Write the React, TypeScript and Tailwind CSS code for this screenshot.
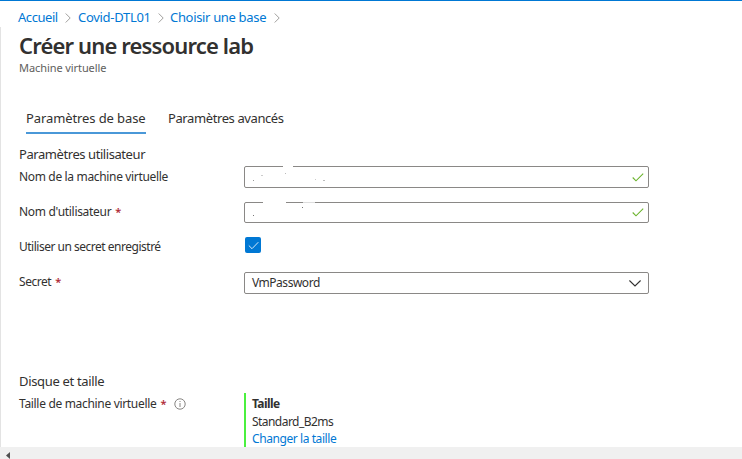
import type { ReactNode } from "react";

function Chevron() {
  return (
    <svg width="6" height="10" viewBox="0 0 6 10" className="shrink-0" fill="none" stroke="#a19f9d" strokeWidth="1">
      <path d="M.7.5 5.2 5 .7 9.5" />
    </svg>
  );
}

function Valid() {
  return (
    <svg width="12" height="9" viewBox="0 0 12 9" className="mr-[4px]" fill="none" stroke="#6bb32c" strokeWidth="1.1">
      <path d="M.7 4.5 4 7.8 11.2.6" />
    </svg>
  );
}

function Required() {
  return <span className="ml-[4px] w-[5px] pt-px text-[11px] font-semibold tracking-normal text-[#b02a36]">*</span>;
}

function Label({ children, className = "" }: { children: ReactNode; className?: string }) {
  return <div className={`flex w-[225px] shrink-0 items-center text-[12px] ${className}`}>{children}</div>;
}

export default function App() {
  return (
    <div className="flex h-[459px] w-[742px] flex-col overflow-hidden whitespace-nowrap border-t border-[#0078d4] bg-white font-['Noto_Sans',sans-serif] text-[#323130]">
      <nav className="flex h-[26px] shrink-0 items-center pl-[18px] pt-[8px] text-[13px] text-[#0078d4]">
        <a className="w-[47px] tracking-[-0.45px]">Accueil</a>
        <Chevron />
        <a className="ml-[7px] w-[80px] tracking-[-0.3px]">Covid-DTL01</a>
        <Chevron />
        <a className="ml-[6px] w-[104px] tracking-[-0.33px]">Choisir une base</a>
        <Chevron />
      </nav>

      <main className="flex h-[420px] shrink-0 flex-col border-l border-[#e3e3e3] pl-[18px]">
        <h1 className="h-[35px] shrink-0 text-[22px] font-semibold leading-[37px] tracking-[-0.85px]">Créer une ressource lab</h1>
        <div className="h-[12px] shrink-0 text-[11px] leading-[12px] tracking-[-0.08px] text-[#605e5c]">Machine virtuelle</div>

        <div className="mt-[31px] flex h-[29px] shrink-0 gap-[22px] pl-[7px] text-[13px] leading-[27px]">
          <div className="h-[29px] w-[120px] border-b-2 border-[#4a98d8] tracking-[-0.1px]">Paramètres de base</div>
          <div className="tracking-[-0.4px]">Paramètres avancés</div>
        </div>

        <h2 className="mt-[10px] h-[22px] shrink-0 text-[13px] leading-[20px] tracking-[-0.43px]">Paramètres utilisateur</h2>
        <div className="flex h-[22px] shrink-0">
          <Label className="tracking-[-0.34px]">Nom de la machine virtuelle</Label>
          <div className="relative flex h-[22px] w-[405px] items-center justify-end rounded-[2px] border border-[#8a8886]">
            <span className="absolute left-[38px] top-[-1px] h-px w-[10px] bg-white" />
            <span className="absolute left-[8px] top-[13px] size-px bg-[#999]" />
            <span className="absolute left-[16px] top-[8px] h-px w-[2px] bg-[#ccc]" />
            <span className="absolute left-[40px] top-[6px] size-px bg-[#bbb]" />
            <span className="absolute left-[70px] top-[12px] size-px bg-[#ccc]" />
            <span className="absolute left-[78px] top-[13px] h-px w-[2px] bg-[#bbb]" />
            <Valid />
          </div>
        </div>
        <div className="mt-[14px] flex h-[21px] shrink-0">
          <Label className="h-[20px] tracking-[-0.3px]">Nom d'utilisateur<Required /></Label>
          <div className="relative flex h-[21px] w-[405px] items-center justify-end rounded-[2px] border border-[#8a8886]">
            <span className="absolute left-[18px] top-[-1px] h-px w-[23px] bg-white" />
            <span className="absolute left-[58px] top-[-1px] h-px w-[12px] bg-[#ddd]" />
            <span className="absolute left-[8px] top-[12px] size-px bg-[#777]" />
            <span className="absolute left-[57px] top-[4px] size-px bg-[#777]" />
            <Valid />
          </div>
        </div>
        <div className="mt-[12px] flex h-[20px] shrink-0">
          <Label className="pt-[3px] tracking-[-0.49px]">Utiliser un secret enregistré</Label>
          <div className="ml-px mt-[2px] flex size-[16px] items-center justify-center rounded-[2px] bg-[#0078d4]">
            <svg width="11" height="9" viewBox="0 0 11 9" fill="none" stroke="#d5e9f8" strokeWidth="1">
              <path d="M.8 4.5 4 7.7 10.3 1.2" />
            </svg>
          </div>
        </div>
        <div className="mt-[17px] flex h-[22px] shrink-0">
          <Label className="h-[20px] tracking-[-0.45px]">Secret<Required /></Label>
          <div className="flex h-[22px] w-[405px] items-center justify-between rounded-[2px] border border-[#8a8886] pl-[7px] pr-[7px] text-[12px]">
            <span className="tracking-[-0.48px]">VmPassword</span>
            <svg width="12" height="7" viewBox="0 0 12 7" fill="none" stroke="#323130" strokeWidth="1.1">
              <path d="M.4.5 6 6 11.6.5" />
            </svg>
          </div>
        </div>

        <h2 className="mt-[76px] h-[23px] shrink-0 text-[13px] leading-[23px] tracking-[-0.33px]">Disque et taille</h2>
        <div className="flex h-[54px] shrink-0">
          <Label className="h-[22px] tracking-[-0.32px]">
            Taille de machine virtuelle<Required />
            <svg width="12" height="12" viewBox="0 0 12 12" className="ml-[9px]" fill="none" stroke="#797775" strokeWidth=".9">
              <circle cx="6" cy="6" r="5.2" />
              <path d="M6 5v4M6 3v1" />
            </svg>
          </Label>
          <div className="h-[54px] border-l-2 border-[#4bf03f] pl-[6px] text-[12px]">
            <div className="h-[19px] font-bold leading-[21px] tracking-[-0.6px]">Taille</div>
            <div className="h-[17px] leading-[19px] tracking-[-0.55px]">Standard_B2ms</div>
            <a className="block h-[18px] leading-[20px] tracking-[-0.42px] text-[#0078d4]">Changer la taille</a>
          </div>
        </div>
      </main>

      <footer className="flex h-[12px] shrink-0 items-end bg-[#f0f0f0] pl-[6px]">
        <svg width="4" height="7" viewBox="0 0 4 7" fill="#505050">
          <path d="M4 0v7L0 3.5z" />
        </svg>
      </footer>
    </div>
  );
}
